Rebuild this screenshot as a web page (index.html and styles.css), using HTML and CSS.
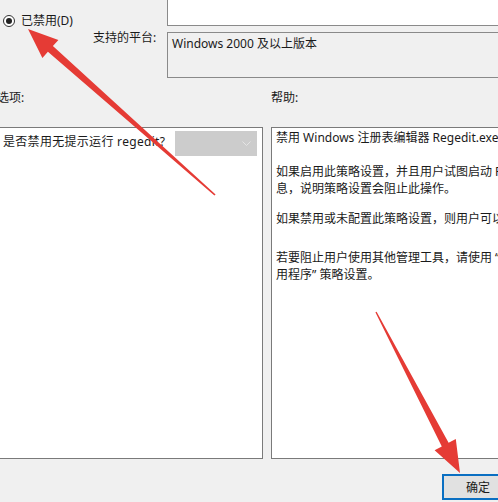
FILE: index.html
```html
<!DOCTYPE html>
<html lang="zh-CN">
<head>
<meta charset="UTF-8">
<meta name="viewport" content="width=device-width, initial-scale=1.0">
<title>阻止访问注册表编辑工具</title>
<link rel="stylesheet" href="styles.css">
</head>
<body>
<div class="dialog">
    <div class="row row-state">
        <div class="state-option">
            <span class="radio checked"></span>
            <span>已禁用(D)</span>
        </div>
        <div class="box box-comment"></div>
    </div>
    <div class="row row-platform">
        <div class="field-label">支持的平台:</div>
        <div class="box box-platform">Windows 2000 及以上版本</div>
    </div>

    <div class="pane-labels">
        <div class="pane-label pane-label-left">选项:</div>
        <div class="pane-label">帮助:</div>
    </div>

    <div class="panes">
        <div class="pane pane-options">
            <div class="option-row">
                <span class="option-text">是否禁用无提示运行 regedit?</span>
                <div class="select">
                    <svg width="9" height="6" viewBox="0 0 9 6"><polyline points="0.5,0.5 4.5,4.5 8.5,0.5" fill="none" stroke="#e4e4e4" stroke-width="1"/></svg>
                </div>
            </div>
        </div>
        <div class="pane pane-help">
            <p class="p1">禁用 Windows 注册表编辑器 Regedit.exe。</p>
            <p class="p2">如果启用此策略设置，并且用户试图启动 Regedit.exe，则会显示一条消<br>息，说明策略设置会阻止此操作。</p>
            <p class="p3">如果禁用或未配置此策略设置，则用户可以正常运行 Regedit.exe。</p>
            <p class="p4">若要阻止用户使用其他管理工具，请使用 “只运行指定的 Windows 应<br>用程序” 策略设置。</p>
        </div>
    </div>

    <div class="footer">
        <button class="btn btn-default">确定</button>
    </div>
</div>

<svg class="arrows" width="498" height="502" viewBox="0 0 498 502">
    <polygon points="215.6,194.6 52.9,46.0 58.4,39.9 28,29 42.4,57.9 47.9,51.8 214.4,195.4" fill="#e53b35"/>
    <polygon points="375.4,312.3 441.8,446.4 434.6,450.2 460,473 455.8,439.1 448.6,442.8 376.6,311.7" fill="#e53b35"/>
</svg>
</body>
</html>
```

FILE: styles.css
```css
html, body {
    margin: 0;
    padding: 0;
    overflow: hidden;
}

body {
    width: 498px;
    height: 502px;
    position: relative;
    background-color: #f0f0f0;
    font-family: "Noto Sans", "Noto Sans CJK SC", sans-serif;
    font-size: 12px;
    line-height: 16px;
    color: #1a1a1a;
}

.dialog {
    width: 520px;
}

.row {
    display: flex;
}

.row-state {
    height: 26px;
}

.state-option {
    width: 167px;
    display: flex;
    align-items: center;
    gap: 6px;
    padding: 13px 0 0 3px;
    box-sizing: border-box;
    height: 29px;
}

.radio {
    width: 12px;
    height: 12px;
    border: 1px solid #333;
    border-radius: 50%;
    box-sizing: border-box;
    display: flex;
    align-items: center;
    justify-content: center;
    background: #fff;
}

.radio.checked::after {
    content: "";
    width: 6px;
    height: 6px;
    border-radius: 50%;
    background: #222;
}

.box {
    flex: 1;
    border: 1px solid #8a8a8a;
    box-sizing: border-box;
}

.box-comment {
    height: 27px;
    margin-top: -1px;
    background-color: #fff;
}

.row-platform {
    margin-top: 6px;
}

.field-label {
    width: 167px;
    padding-left: 93px;
    box-sizing: border-box;
    margin-top: -2px;
}

.box-platform {
    height: 46px;
    padding: 3px 4px;
    background-color: #f0f0f0;
}

.pane-labels {
    display: flex;
    gap: 8px;
    margin: 12px 0 0 -1px;
}

.pane-label {
    flex: 1;
}

.pane-label-left {
    flex: none;
    width: 266px;
    margin-left: -2px;
}

.panes {
    display: flex;
    gap: 8px;
    margin: 21px 0 0 -1px;
}

.pane {
    height: 332px;
    border: 1px solid #7a7a7a;
    background-color: #fff;
    box-sizing: border-box;
}

.pane-options {
    width: 264px;
    flex: none;
}

.pane-help {
    flex: 1;
    padding: 1px 0 0 4px;
    line-height: 17px;
    white-space: nowrap;
    overflow: hidden;
}

.option-row {
    display: flex;
    align-items: flex-start;
    padding: 3px 5px 0 3px;
}

.option-text {
    margin-top: 3px;
    letter-spacing: 0.3px;
}

.select {
    margin-left: auto;
    width: 82px;
    height: 25px;
    background-color: #cccccc;
    display: flex;
    align-items: center;
    justify-content: flex-end;
    padding-right: 6px;
    box-sizing: border-box;
}

.pane-help p {
    margin: 0;
}

.pane-help .p2 {
    margin-top: 17px;
}

.pane-help .p3 {
    margin-top: 13px;
}

.pane-help .p4 {
    margin-top: 22px;
}

.footer {
    display: flex;
    justify-content: flex-end;
    margin-top: 15px;
}

.btn {
    width: 78px;
    height: 26px;
    font-family: inherit;
    font-size: 12px;
    color: #1a1a1a;
    background-color: #e1e1e1;
    border: 2px solid #0a6fc2;
    padding: 0 6px 0 0;
    box-sizing: border-box;
}

.arrows {
    position: absolute;
    left: 0;
    top: 0;
    pointer-events: none;
}
```
